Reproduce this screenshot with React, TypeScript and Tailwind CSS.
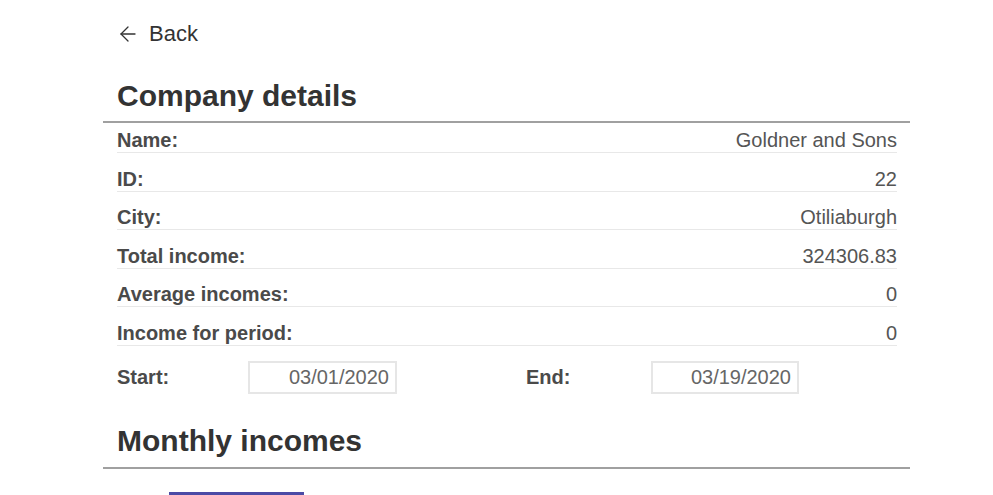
import React from "react";
import { ArrowLeft } from "lucide-react";

const rows: { label: string; value: string }[] = [
  { label: "Name:", value: "Goldner and Sons" },
  { label: "ID:", value: "22" },
  { label: "City:", value: "Otiliaburgh" },
  { label: "Total income:", value: "324306.83" },
  { label: "Average incomes:", value: "0" },
  { label: "Income for period:", value: "0" },
];

const DateBox: React.FC<{ value: string; width: string }> = ({ value, width }) => (
  <div
    className={`${width} h-[33px] border-2 border-[#e6e6e6] text-right pr-[6px] text-[20px] leading-[29px] text-[#666]`}
  >
    {value}
  </div>
);

const App: React.FC = () => {
  return (
    <div
      className="min-h-[495px] bg-white"
      style={{ fontFamily: '"Liberation Sans", Arial, sans-serif' }}
    >
      <div className="ml-[103px] w-[807px]">
        {/* Back link */}
        <div className="pt-[21px] pl-[13px] flex items-center gap-[9px] text-[22px] leading-[26px] text-[#333]">
          <ArrowLeft size={24} strokeWidth={1.3} />
          <span>Back</span>
        </div>

        {/* Company details */}
        <h1 className="mt-[32px] pl-[14px] text-[30px] leading-[34px] font-bold text-[#333]">
          Company details
        </h1>
        <div className="mt-[8px] h-[2px] bg-[#a0a0a0]" />

        <div className="pl-[14px] pr-[13px]">
          {rows.map((row, idx) => (
            <div
              key={row.label}
              className={`${idx === 0 ? "mt-[6px]" : "mt-[14.6px]"} flex justify-between border-b border-[#e8e8e8] text-[20px] leading-[23px]`}
            >
              <span className="font-bold text-[#4a4a4a]">{row.label}</span>
              <span className="text-[#555]">{row.value}</span>
            </div>
          ))}

          <div className="mt-[15px] flex items-center">
            <span className="w-[131px] text-[20px] font-bold text-[#4a4a4a]">Start:</span>
            <DateBox value="03/01/2020" width="w-[149px]" />
            <span className="ml-[129px] w-[125px] text-[20px] font-bold text-[#4a4a4a]">End:</span>
            <DateBox value="03/19/2020" width="w-[148px]" />
          </div>
        </div>

        {/* Monthly incomes */}
        <h2 className="mt-[30px] pl-[14px] text-[30px] leading-[34px] font-bold text-[#333]">
          Monthly incomes
        </h2>
        <div className="mt-[9px] h-[2px] bg-[#a0a0a0]" />

        <div className="mt-[23px] ml-[66px] w-[135px] h-[6px] bg-[#4b4ba6]" />
      </div>
    </div>
  );
};

export default App;
